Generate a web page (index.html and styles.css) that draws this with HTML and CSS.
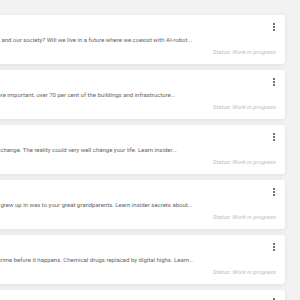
FILE: index.html
```html
<!DOCTYPE html>
<html lang="en">
<head>
  <meta charset="UTF-8">
  <meta name="viewport" content="width=device-width, initial-scale=1.0">
  <title>Future Stories</title>
  <link rel="stylesheet" href="styles.css">
</head>
<body>
  <main class="feed">
    <article class="story">
      <header class="story__head"><button class="story__menu" aria-label="More"><span></span><span></span><span></span></button></header>
      <p class="story__text">How will artificial intelligence change the ways we work, learn, love, and our society? Will we live in a future where we coexist with AI-robot...</p>
      <p class="story__status">Status: Work in progress</p>
    </article>
    <article class="story">
      <header class="story__head"><button class="story__menu" aria-label="More"><span></span><span></span><span></span></button></header>
      <p class="story__text">The world population keeps growing, smart cities are becoming more important, over 70 per cent of the buildings and infrastructure...</p>
      <p class="story__status">Status: Work in progress</p>
    </article>
    <article class="story">
      <header class="story__head"><button class="story__menu" aria-label="More"><span></span><span></span><span></span></button></header>
      <p class="story__text">The ways we live, work, travel, and relate to one another is about to change. The reality could very well change your life. Learn insider...</p>
      <p class="story__status">Status: Work in progress</p>
    </article>
    <article class="story">
      <header class="story__head"><button class="story__menu" aria-label="More"><span></span><span></span><span></span></button></header>
      <p class="story__text">Tomorrow will now be as radically different to you as the world you grew up in was to your great grandparents. Learn insider secrets about...</p>
      <p class="story__status">Status: Work in progress</p>
    </article>
    <article class="story">
      <header class="story__head"><button class="story__menu" aria-label="More"><span></span><span></span><span></span></button></header>
      <p class="story__text">Minority report is here: in the future police will be able to predict a crime before it happens. Chemical drugs replaced by digital highs. Learn...</p>
      <p class="story__status">Status: Work in progress</p>
    </article>
    <article class="story">
      <header class="story__head"><button class="story__menu" aria-label="More"><span></span><span></span><span></span></button></header>
      <p class="story__text">Space tourism, asteroid mining and colonies on Mars are closer than you think. Learn...</p>
      <p class="story__status">Status: Work in progress</p>
    </article>
  </main>
</body>
</html>
```

FILE: styles.css
```css
body {
  margin: 0;
  padding: 15px 15px 0 0;
  background: #f2f2f2;
  font-family: Roboto, "Noto Sans", sans-serif;
  overflow: hidden;
}

.feed {
  display: flex;
  flex-direction: column;
  gap: 6px;
  margin-left: -194px;
}

.story {
  background: #fff;
  border-radius: 3px;
  box-shadow: 0 1px 4px rgba(0, 0, 0, 0.08);
  padding: 8px 9px 8px 16px;
  height: 49px;
  box-sizing: border-box;
}

.story__head {
  display: flex;
  justify-content: flex-end;
  height: 8px;
  padding-right: 1px;
}

.story__menu {
  display: flex;
  flex-direction: column;
  justify-content: space-between;
  width: 2px;
  height: 8px;
  padding: 0;
  border: none;
  background: none;
  cursor: pointer;
}

.story__menu span {
  width: 2px;
  height: 2px;
  border-radius: 50%;
  background: #444;
}

.story__text {
  margin: 5px 0 0;
  font-size: 6px;
  line-height: 8px;
  color: #666;
  white-space: nowrap;
}

.story__status {
  margin: 4px 0 0;
  font-size: 6px;
  line-height: 8px;
  font-style: italic;
  color: #bdbdbd;
  text-align: right;
}
```
